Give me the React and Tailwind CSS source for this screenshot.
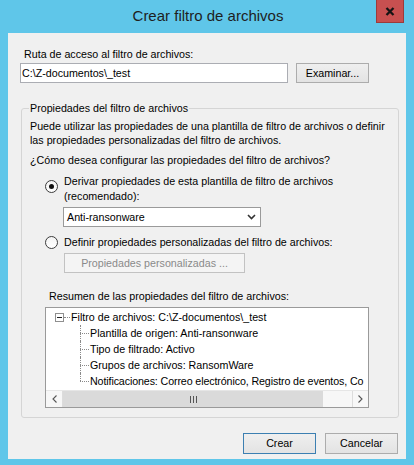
import React from "react";

function Radio({ checked }) {
  return (
    <div className="w-[13px] h-[13px] rounded-full border border-[#3c3c3c] bg-gradient-to-b from-[#f4f4f4] to-[#ffffff] flex items-center justify-center shrink-0">
      {checked && <div className="w-[5px] h-[5px] rounded-full bg-[#111]" />}
    </div>
  );
}

function ChildRow({ text, last }) {
  return (
    <div className="flex h-[16px] items-stretch">
      <div className="ml-[34px] w-[9px] flex flex-col shrink-0">
        <div className="h-[8px] border-l border-dotted border-[#8a8a8a]" />
        <div
          className={
            last
              ? "flex-1 border-t border-dotted border-[#8a8a8a]"
              : "flex-1 border-t border-l border-dotted border-[#8a8a8a]"
          }
        />
      </div>
      <div
        className={
          last
            ? "ml-[1px] leading-[16px] whitespace-nowrap tracking-[-0.12px]"
            : "ml-[1px] leading-[16px] whitespace-nowrap"
        }
      >
        {text}
      </div>
    </div>
  );
}

export default function App() {
  return (
    <div className="w-[414px] h-[465px] bg-[#5fc6e9] flex flex-col font-['Liberation_Sans',Arial,sans-serif] text-[10.7px] text-black overflow-hidden">
      <div className="relative h-[33px] flex items-center justify-center shrink-0">
        <span className="text-[15px] text-[#1e1e1e] ml-[2px]">Crear filtro de archivos</span>
        <div className="absolute right-[10px] top-0 w-[28px] h-[23px] bg-[#c75050] border border-t-0 border-[#9c3b3b] flex items-center justify-center">
          <svg width="10" height="9" viewBox="0 0 10 9">
            <path d="M1.5 1 L8.5 8 M8.5 1 L1.5 8" stroke="#141414" strokeWidth="2.3" />
          </svg>
        </div>
      </div>

      <div className="mx-[8px] h-[426px] bg-[#f0f0f0] flex flex-col pl-[12px] pr-[8px] pt-[14px] shrink-0">
        <div className="leading-[15px] pl-[4px]">Ruta de acceso al filtro de archivos:</div>
        <div className="flex mt-[1px] h-[20px] gap-[8px]">
          <div className="w-[268px] h-[20px] bg-white border border-[#abadb3] flex items-center pl-[1px]">
            C:\Z-documentos\_test
          </div>
          <div className="w-[73px] h-[20px] border border-[#acacac] bg-gradient-to-b from-[#efefef] to-[#e3e3e3] flex items-center justify-center">
            Examinar...
          </div>
        </div>

        <fieldset className="mt-[18px] w-[378px] ml-[1px] border border-[#d5d5d5] rounded-[3px] pl-[8px] pt-[3px] pb-[9px]">
          <legend className="px-[1px] -ml-[1px] leading-[15px]">Propiedades del filtro de archivos</legend>
          <div className="leading-[14px]">
            Puede utilizar las propiedades de una plantilla de filtro de archivos o definir
            <br />
            las propiedades personalizadas del filtro de archivos.
          </div>
          <div className="mt-[6px] leading-[14px]">¿Cómo desea configurar las propiedades del filtro de archivos?</div>

          <div className="mt-[7px] ml-[15px] flex items-start gap-[6px]">
            <div className="mt-[6px]">
              <Radio checked />
            </div>
            <div className="leading-[15px]">
              Derivar propiedades de esta plantilla de filtro de archivos
              <br />
              (recomendado):
            </div>
          </div>

          <div className="mt-[3px] ml-[33px] w-[198px] h-[20px] border border-[#9a9a9a] bg-white flex items-center justify-between pl-[3px] pr-[4px]">
            <span>Anti-ransonware</span>
            <svg width="9" height="6" viewBox="0 0 9 6">
              <path d="M1 1 L4.5 4.5 L8 1" stroke="#333" strokeWidth="1.6" fill="none" />
            </svg>
          </div>

          <div className="mt-[8px] ml-[15px] h-[15px] flex items-center gap-[6px]">
            <Radio />
            <div className="leading-[15px]">Definir propiedades personalizadas del filtro de archivos:</div>
          </div>

          <div className="mt-[3px] ml-[34px] w-[181px] h-[20px] border border-[#c2c2c2] bg-[#f4f4f4] text-[#8a8a8a] flex items-center justify-center">
            Propiedades personalizadas ...
          </div>

          <div className="mt-[16px] ml-[19px] leading-[15px]">Resumen de las propiedades del filtro de archivos:</div>

          <div className="mt-[3px] ml-[15px] w-[324px] h-[101px] border border-[#9a9a9a] bg-white flex flex-col">
            <div className="flex-1 pt-[1px] overflow-hidden">
              <div className="flex h-[16px] items-center">
                <div className="ml-[9px] w-[9px] h-[9px] border border-[#8f8f8f] bg-white flex items-center justify-center shrink-0">
                  <div className="w-[5px] h-[1px] bg-[#222]" />
                </div>
                <div className="w-[6px] border-t border-dotted border-[#8a8a8a]" />
                <div className="ml-[1px] leading-[16px] whitespace-nowrap">Filtro de archivos: C:\Z-documentos\_test</div>
              </div>
              <ChildRow text="Plantilla de origen: Anti-ransonware" />
              <ChildRow text="Tipo de filtrado: Activo" />
              <ChildRow text="Grupos de archivos: RansomWare" />
              <ChildRow text="Notificaciones: Correo electrónico, Registro de eventos, Co" last />
            </div>
            <div className="h-[17px] flex border-t border-[#e6e6e6] bg-[#f7f7f7]">
              <div className="w-[17px] flex items-center justify-center border-r border-[#dcdcdc]">
                <svg width="5" height="8" viewBox="0 0 5 8">
                  <path d="M4.5 0.5 L1 4 L4.5 7.5" stroke="#555" strokeWidth="1.1" fill="none" />
                </svg>
              </div>
              <div className="w-[260px] bg-[#dadada] flex items-center justify-center gap-[2px]">
                <div className="w-[1px] h-[7px] bg-[#555]" />
                <div className="w-[1px] h-[7px] bg-[#555]" />
                <div className="w-[1px] h-[7px] bg-[#555]" />
              </div>
              <div className="flex-1" />
              <div className="w-[16px] flex items-center justify-center border-l border-[#dcdcdc]">
                <svg width="5" height="8" viewBox="0 0 5 8">
                  <path d="M0.5 0.5 L4 4 L0.5 7.5" stroke="#555" strokeWidth="1.1" fill="none" />
                </svg>
              </div>
            </div>
          </div>
        </fieldset>

        <div className="mt-[15px] flex justify-end gap-[9px]">
          <div className="w-[73px] h-[21px] border border-[#3c7fb1] bg-gradient-to-b from-[#efefef] to-[#e3e3e3] flex items-center justify-center">
            Crear
          </div>
          <div className="w-[73px] h-[21px] border border-[#acacac] bg-gradient-to-b from-[#efefef] to-[#e3e3e3] flex items-center justify-center">
            Cancelar
          </div>
        </div>
      </div>
    </div>
  );
}
